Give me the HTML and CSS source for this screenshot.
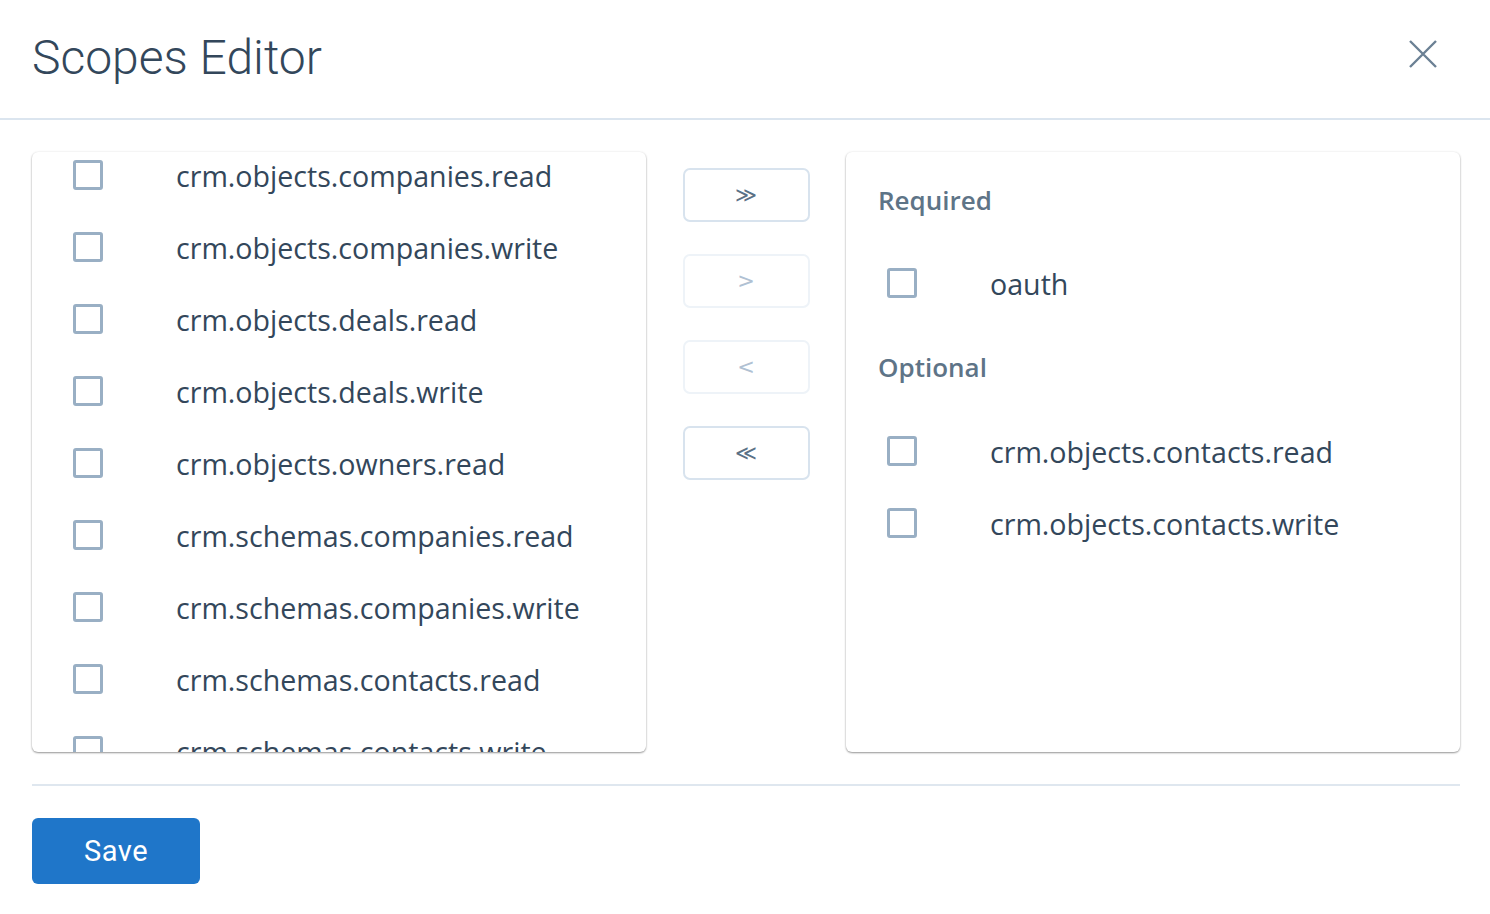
FILE: index.html
```html
<!DOCTYPE html>
<html lang="en">
  <head>
    <meta charset="UTF-8" />
    <meta name="viewport" content="width=device-width, initial-scale=1.0" />
    <title>Scopes Editor</title>
    <link rel="stylesheet" href="styles.css">
  </head>
  <body>
    <div class="editor-header">
      <h1 class="editor-title">Scopes Editor</h1>
      <button class="close-btn" aria-label="Close">
        <svg width="30" height="30" viewBox="0 0 30 30">
          <path d="M2 2 L28 28 M28 2 L2 28" stroke="#6b8094" stroke-width="2.4" fill="none" />
        </svg>
      </button>
    </div>

    <div class="editor-body">
      <div class="panel">
        <div class="scope-list">
          <div class="scope"><input type="checkbox" id="s1" /><label for="s1">crm.objects.companies.read</label></div>
          <div class="scope"><input type="checkbox" id="s2" /><label for="s2">crm.objects.companies.write</label></div>
          <div class="scope"><input type="checkbox" id="s3" /><label for="s3">crm.objects.deals.read</label></div>
          <div class="scope"><input type="checkbox" id="s4" /><label for="s4">crm.objects.deals.write</label></div>
          <div class="scope"><input type="checkbox" id="s5" /><label for="s5">crm.objects.owners.read</label></div>
          <div class="scope"><input type="checkbox" id="s6" /><label for="s6">crm.schemas.companies.read</label></div>
          <div class="scope"><input type="checkbox" id="s7" /><label for="s7">crm.schemas.companies.write</label></div>
          <div class="scope"><input type="checkbox" id="s8" /><label for="s8">crm.schemas.contacts.read</label></div>
          <div class="scope"><input type="checkbox" id="s9" /><label for="s9">crm.schemas.contacts.write</label></div>
        </div>
      </div>

      <div class="move-buttons">
        <button class="move-btn">&#8811;</button>
        <button class="move-btn" disabled>&gt;</button>
        <button class="move-btn" disabled>&lt;</button>
        <button class="move-btn">&#8810;</button>
      </div>

      <div class="panel panel-selected">
        <div class="group-title">Required</div>
        <div class="scope"><input type="checkbox" id="r1" /><label for="r1">oauth</label></div>
        <div class="group-title group-next">Optional</div>
        <div class="scope"><input type="checkbox" id="o1" /><label for="o1">crm.objects.contacts.read</label></div>
        <div class="scope"><input type="checkbox" id="o2" /><label for="o2">crm.objects.contacts.write</label></div>
      </div>
    </div>

    <div class="editor-footer">
      <button class="save-btn">Save</button>
    </div>
  </body>
</html>
```

FILE: styles.css
```css
* {
  margin: 0;
  padding: 0;
  box-sizing: border-box;
}
body {
  background: #fff;
  color: #33475b;
  font-family: "Open Sans", "Liberation Sans", sans-serif;
}
.editor-header {
  height: 120px;
  display: flex;
  align-items: center;
  justify-content: space-between;
  padding: 0 52px 0 32px;
  border-bottom: 2px solid #dbe5ef;
}
.editor-title {
  font-family: Roboto, sans-serif;
  font-weight: 300;
  font-size: 48px;
  color: #33475b;
  margin-top: -4px;
}
.close-btn {
  background: none;
  border: none;
  width: 30px;
  height: 30px;
  margin-top: -10px;
  cursor: pointer;
}
.editor-body {
  display: grid;
  grid-template-columns: 614px 200px 614px;
  padding: 32px 30px 32px 32px;
}
.panel {
  height: 600px;
  background: #fff;
  border-radius: 6px;
  box-shadow: 0 1px 2px rgba(0, 0, 0, 0.4), 0 0 3px rgba(0, 0, 0, 0.06);
  overflow: hidden;
}
.scope {
  display: flex;
  align-items: center;
  height: 46px;
  margin-bottom: 26px;
  padding-left: 41px;
}
.scope input[type="checkbox"] {
  appearance: none;
  width: 30px;
  height: 30px;
  border: 3px solid #99afc4;
  border-radius: 3px;
  background: #fff;
  flex-shrink: 0;
}
.scope label {
  margin-left: 73px;
  font-size: 28.6px;
  white-space: nowrap;
}
.move-buttons {
  display: flex;
  flex-direction: column;
  align-items: center;
  gap: 32px;
  padding-top: 16px;
}
.move-btn {
  width: 127px;
  height: 54px;
  background: #fff;
  border: 2px solid #d8e3ee;
  border-radius: 7px;
  color: #5b7186;
  font-family: "DejaVu Sans", sans-serif;
  font-size: 21px;
}
.move-btn:disabled {
  border-color: #eef3f8;
  color: #b0c1d3;
}
.panel-selected {
  padding-top: 24px;
}
.group-title {
  height: 48px;
  line-height: 48px;
  padding-left: 32px;
  margin-bottom: 36px;
  font-size: 26px;
  font-weight: 600;
  color: #5e7487;
}
.group-next {
  margin-top: 37px;
  margin-bottom: 37px;
}
.editor-footer {
  margin: 0 30px 0 32px;
  border-top: 2px solid #dfe7ef;
  padding-top: 32px;
}
.save-btn {
  width: 168px;
  height: 66px;
  background: #1f76c9;
  color: #fff;
  border: none;
  border-radius: 6px;
  font-family: Roboto, sans-serif;
  font-size: 29px;
  letter-spacing: 0.5px;
}
```
